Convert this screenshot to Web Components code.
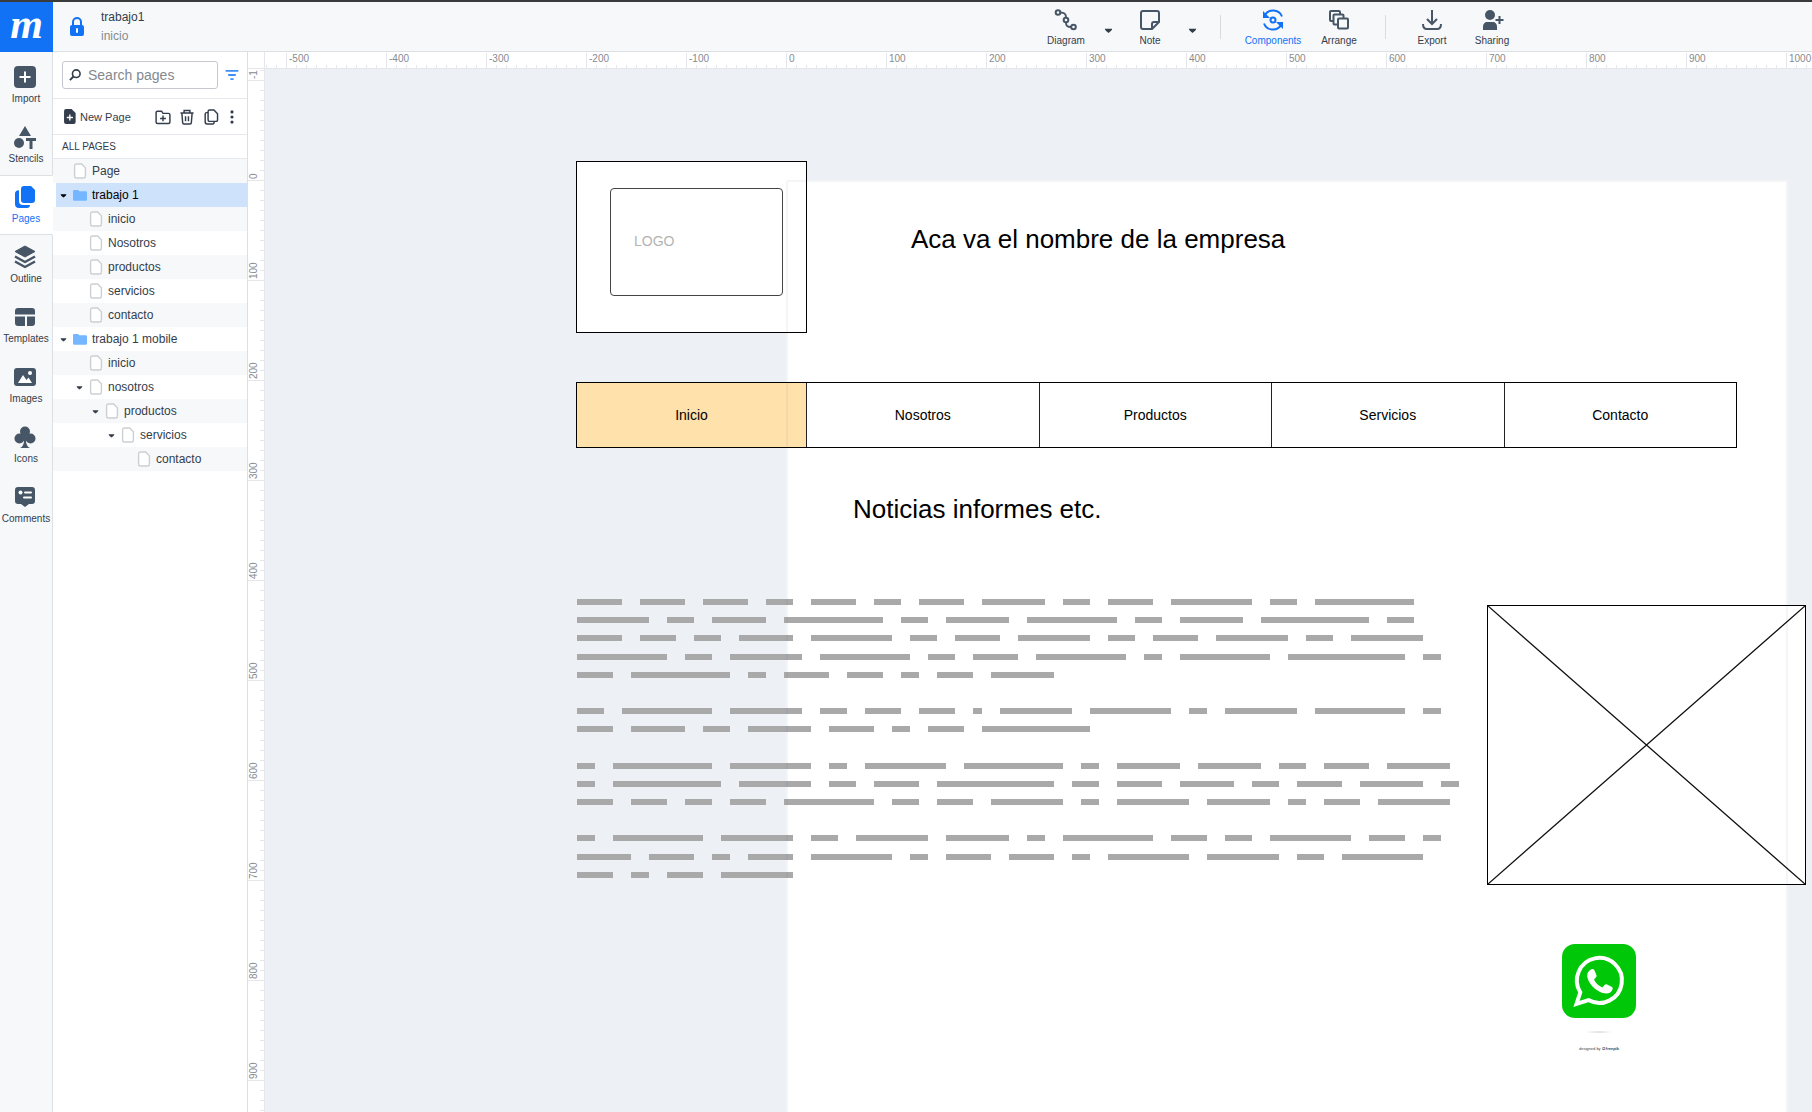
<!DOCTYPE html>
<html lang="es">
<head>
<meta charset="utf-8">
<title>trabajo1 - inicio</title>
<style>
  :root {
    --ink: #333d4b; --icon: #475666; --blue: #1272f5; --chrome: #f7f8fa;
    --line: #dcdfe4; --tick: #e4e6eb; --muted: #858b92; --canvas: #edf0f5;
  }
  html, body { height: 100%; margin: 0; }
  body { font: 12px/16px "Liberation Sans", Arial, sans-serif; color: var(--ink); overflow: hidden; }
</style>
</head>
<body>
<mock-app></mock-app>
<script>
const ICONS = {
  import: '<rect width="22" height="22" rx="4" fill="currentColor"/><path d="M11 5.500v11M5.500 11h11" stroke="#fff" stroke-width="2"/>',
  stencils: '<path d="M11 0l6 10H5zM12 12h10v3h-3.500v8h-3v-8H12z" fill="currentColor"/><circle cx="5" cy="17" r="5" fill="currentColor"/>',
  pages: '<path d="M10 0h7l4 4v10a3 3 0 0 1-3 3h-8a3 3 0 0 1-3-3V3a3 3 0 0 1 3-3z" fill="currentColor"/><path d="M5 4.500a3 3 0 0 0-4 3V18a4 4 0 0 0 4 4h8a3 3 0 0 0 3-3H9a4 4 0 0 1-4-4z" fill="currentColor"/>',
  outline: '<path d="M11 0l10 5.500L11 11 1 5.500z" fill="currentColor" stroke="currentColor" stroke-linejoin="round"/><path d="M1 10.500l10 5.500 10-5.500M1 15.500L11 21l10-5.500" fill="none" stroke="currentColor" stroke-width="2.500" stroke-linejoin="round"/>',
  templates: '<path d="M4 2h14a3 3 0 0 1 3 3v3.500H1V5a3 3 0 0 1 3-3zM1 10.500h10V20H4a3 3 0 0 1-3-3zM13 10.500h8V17a3 3 0 0 1-3 3h-5z" fill="currentColor"/>',
  images: '<rect y="2" width="22" height="18" rx="3" fill="currentColor"/><path d="M4 17l5-8 3.500 5 2-2.500L18 17z" fill="#fff"/><circle cx="16" cy="7" r="2" fill="#fff"/>',
  icons: '<g fill="currentColor"><circle cx="11" cy="5.500" r="5"/><circle cx="5.500" cy="12.500" r="5"/><circle cx="16.500" cy="12.500" r="5"/><path d="M10 8h2v8q1 5 4 6H6q3-1 4-6z"/></g>',
  comments: '<path d="M4 1h14a3 3 0 0 1 3 3v11a3 3 0 0 1-3 3h-3l-4 3-4-3H4a3 3 0 0 1-3-3V4a3 3 0 0 1 3-3z" fill="currentColor"/><path d="M11 6.500h6M10 11.500h7" stroke="#fff" stroke-width="2" stroke-linecap="round"/><circle cx="6.500" cy="6.500" r="2" fill="#fff"/>',
  diagram: '<g fill="none" stroke="currentColor" stroke-width="2"><circle cx="3" cy="3.500" r="2.300"/><circle cx="11" cy="11" r="2.300"/><circle cx="18.500" cy="18" r="2.300"/><path d="M5.500 3.500c4 0 5.500 1 5.500 5M11 13.500c0 3.500 1 4.500 5 4.500"/></g>',
  note: '<path d="M4 2h14a2 2 0 0 1 2 2v9l-7 7H4a2 2 0 0 1-2-2V4a2 2 0 0 1 2-2zM20 13h-5a2 2 0 0 0-2 2v5" fill="none" stroke="currentColor" stroke-width="2" stroke-linejoin="round"/>',
  components: '<g fill="none" stroke="currentColor" stroke-width="2"><circle cx="11" cy="11" r="2.500"/><path d="M2.500 7a9.500 9.500 0 0 1 17.500.500M2 14.500a9.500 9.500 0 0 0 17.500.500"/></g><path d="M1 2v7h7zM21 20v-7h-7z" fill="currentColor"/>',
  arrange: '<g fill="var(--chrome)" stroke="currentColor" stroke-width="2"><rect x="2" y="2" width="10" height="10" rx="1"/><rect x="5.500" y="5.500" width="10" height="10" rx="1"/><rect x="10" y="9.500" width="10" height="10" rx="1"/></g>',
  export: '<path d="M11 1v14M6 10l5 5 5-5M2 15q0 5 4 5h10q4 0 4-5" fill="none" stroke="currentColor" stroke-width="2"/>',
  sharing: '<g fill="currentColor"><circle cx="9" cy="6" r="5"/><path d="M2 21v-3c0-3.500 2-5 4-5h6c2 0 4 1.500 4 5v3z"/></g><path d="M18.500 7v8M14.500 11h8" stroke="currentColor" stroke-width="2"/>',
  lock: '<rect x="4" y="9" width="14" height="11" rx="2" fill="currentColor"/><path d="M7 10V6a4 4 0 0 1 8 0v4" fill="none" stroke="currentColor" stroke-width="2"/><path d="M11 13v3" stroke="#fff" stroke-width="2" stroke-linecap="round"/>',
  search: '<circle cx="13" cy="9" r="6" fill="none" stroke="currentColor" stroke-width="2.500"/><path d="M9 13l-6 6" stroke="currentColor" stroke-width="3"/>',
  filter: '<path d="M1 4.500h20M5 11h12M8.500 17.500h5" stroke="currentColor" stroke-width="3"/>',
  newpage: '<path d="M6 0h8l6 6v13a3 3 0 0 1-3 3H6a3 3 0 0 1-3-3V3a3 3 0 0 1 3-3z" fill="currentColor"/><path d="M11.500 8v9M7 12.500h9" stroke="#fff" stroke-width="2"/>',
  newfolder: '<path d="M1.500 5a2 2 0 0 1 2-2H9l2 3h7.500a2 2 0 0 1 2 2v10a2 2 0 0 1-2 2h-15a2 2 0 0 1-2-2z" fill="none" stroke="currentColor" stroke-width="2"/><path d="M11 9v8M7 13h8" stroke="currentColor" stroke-width="2"/>',
  trash: '<path d="M2 5.500h18M7 5V2h8v3M4 6l1 12.500a2 2 0 0 0 2 2h8a2 2 0 0 0 2-2L18 6M9 10v7M13 10v7" fill="none" stroke="currentColor" stroke-width="2"/>',
  copy: '<path d="M9 1.500h6l5 5V15a2 2 0 0 1-2 2H9a2 2 0 0 1-2-2V3.500a2 2 0 0 1 2-2zM7 5H5a2 2 0 0 0-2 2v11a2.500 2.500 0 0 0 2.500 2.500H13a2 2 0 0 0 2-3" fill="none" stroke="currentColor" stroke-width="2"/>',
  more: '<g fill="currentColor"><circle cx="11" cy="3" r="2.500"/><circle cx="11" cy="11" r="2.500"/><circle cx="11" cy="19" r="2.500"/></g>',
  caret: '<path d="M2 7h18q0 3-4 6l-5 4-5-4Q2 10 2 7z" fill="currentColor"/>',
  folder: '<path d="M0 5a2 2 0 0 1 2-2h6l2 2h10a2 2 0 0 1 2 2v11a2 2 0 0 1-2 2H2a2 2 0 0 1-2-2z" fill="#74b6ff"/>',
  doc: '<path d="M5.500 0h8l6 6v13a3 3 0 0 1-3 3h-11a3 3 0 0 1-3-3V3a3 3 0 0 1 3-3z" fill="#fff" stroke="#ccd0d4" stroke-width="2.200"/>'
};

function define(name, render) {
  customElements.define(name, class extends HTMLElement {
    connectedCallback() {
      if (this.shadowRoot) return;
      this.attachShadow({ mode: 'open' }).innerHTML = render(this);
    }
  });
}

define('app-icon', el => {
  const s = el.getAttribute('size') || 22;
  return `<style>:host{display:inline-flex;flex:none;width:${s}px;height:${s}px}svg{width:100%;height:100%;overflow:visible}</style>
  <svg viewBox="0 0 22 22" aria-hidden="true">${ICONS[el.getAttribute('name')]}</svg>`;
});

define('tool-button', el => `<style>
  :host{display:flex;width:var(--w,60px)}
  button{all:unset;flex:1;display:flex;flex-direction:column;align-items:center;gap:4px;font-size:10px;line-height:12px;color:var(--ink);cursor:pointer;white-space:nowrap}
  app-icon{color:var(--icon)}
  :host([active]) button,:host([active]) app-icon{color:var(--blue)}
</style><button type="button"><app-icon name="${el.getAttribute('icon')}"></app-icon><slot></slot></button>`);

define('caret-button', () => `<style>
  :host{display:flex;width:24px;align-self:center}
  button{all:unset;flex:1;display:flex;justify-content:center;color:var(--ink)}
</style><button type="button" aria-label="Más opciones"><app-icon name="caret" size="9"></app-icon></button>`);

define('top-bar', () => `<style>
  :host{display:flex;flex:none;height:49px;background:var(--chrome);border-top:2px solid #3a3b3d;border-bottom:1px solid var(--line)}
  .logo{flex:none;width:53px;height:50px;background:var(--blue);color:#fff;text-align:center;text-decoration:none;font:italic bold 42px/44px "Liberation Serif",serif}
  .lock{all:unset;color:var(--blue);display:flex;align-items:center;padding:0 13px}
  .doc{flex:1;display:flex;flex-direction:column;justify-content:center;gap:3px}
  .doc span{color:#858b92}
  nav{display:flex;padding:7px 290px 0 0}
  hr{width:1px;height:24px;margin:6px 16px 0;border:0;background:#d8dce1}
</style>
<a class="logo" href="#" aria-label="Inicio de la aplicación">m</a>
<button class="lock" type="button" aria-label="Bloqueado"><app-icon name="lock"></app-icon></button>
<div class="doc"><div>trabajo1</div><span>inicio</span></div>
<nav>
  <tool-button icon="diagram">Diagram</tool-button><caret-button></caret-button>
  <tool-button icon="note">Note</tool-button><caret-button></caret-button>
  <hr>
  <tool-button icon="components" active style="--w:72px">Components</tool-button>
  <tool-button icon="arrange">Arrange</tool-button>
  <hr>
  <tool-button icon="export">Export</tool-button>
  <tool-button icon="sharing">Sharing</tool-button>
</nav>`);

define('rail-item', el => `<style>
  :host{display:flex;height:60px;box-sizing:border-box;padding-top:11px;border-right:1px solid var(--line)}
  button{all:unset;flex:1;min-width:0;display:flex;flex-direction:column;align-items:center;gap:5px;font-size:10px;line-height:12px;white-space:nowrap}
  app-icon{color:var(--icon);margin-right:2px}
  :host([active]){background:#fff;padding-top:10px;border-top:1px solid var(--line);border-bottom:1px solid var(--line);border-right:1px solid #fff}
  :host([active]) button,:host([active]) app-icon{color:var(--blue)}
</style><button type="button"><app-icon name="${el.getAttribute('icon')}"></app-icon><slot></slot></button>`);

define('side-rail', () => `<style>
  :host{display:flex;flex-direction:column;flex:none;width:53px;background:var(--chrome)}
  i{height:3px;border-right:1px solid var(--line)} i:last-child{flex:1}
</style><i></i>
${['Import','Stencils','Pages','Outline','Templates','Images','Icons','Comments'].map(t =>
  `<rail-item icon="${t.toLowerCase()}" ${t === 'Pages' ? 'active' : ''}>${t}</rail-item>`).join('')}<i></i>`);

define('tree-row', el => {
  const level = +el.getAttribute('level') || 0;
  return `<style>
  :host{display:flex;height:24px}
  :host(:nth-child(odd)){background:var(--chrome)}
  :host([selected]){background:#cfe2fc;color:#000;margin-left:3px}
  a{flex:1;display:flex;align-items:center;padding-left:${5 + level * 16}px;color:inherit;text-decoration:none}
  :host([selected]) a{padding-left:2px}
  .c{width:11px;display:flex;justify-content:center;margin-right:4px}
  slot{display:block;margin-left:5px}
</style><a href="#"><span class="c">${el.hasAttribute('open') ? '<app-icon name="caret" size="7"></app-icon>' : ''}</span><app-icon name="${el.getAttribute('icon') || 'doc'}" size="14"></app-icon><slot></slot></a>`;
});

define('pages-panel', () => `<style>
  :host{display:flex;flex-direction:column;flex:none;width:194px;background:#fff;border-right:1px solid var(--line)}
  .search{display:flex;align-items:center;gap:7px;height:46px;padding:0 8px 0 9px;border-bottom:1px solid #e5e8ec}
  label{flex:1;min-width:0;height:26px;display:flex;align-items:center;gap:6px;padding-left:5px;border:1px solid #c5c9cf;border-radius:3px}
  input{all:unset;flex:1;min-width:0;font-size:14px;line-height:20px}
  input::placeholder{color:#83898f}
  button{all:unset;display:flex;align-items:center}
  .filter{color:#3d8ef7}
  .actions{display:flex;align-items:center;gap:8px;height:35px;padding:0 8px 0 9px;border-bottom:1px solid #e5e8ec}
  .new{flex:1;gap:3px;font-size:11px}
  .more{margin-left:-2px}
  h2{margin:0;font-size:10px;font-weight:400;line-height:23px;padding-left:9px;border-bottom:1px solid #e5e8ec}
</style>
<div class="search"><label><app-icon name="search" size="14"></app-icon><input type="search" placeholder="Search pages" aria-label="Search pages"></label>
<button class="filter" type="button" aria-label="Filtrar"><app-icon name="filter" size="14"></app-icon></button></div>
<div class="actions"><button class="new" type="button"><app-icon name="newpage" size="15"></app-icon>New Page</button>
<button type="button" aria-label="Nueva carpeta"><app-icon name="newfolder" size="16"></app-icon></button>
<button type="button" aria-label="Eliminar"><app-icon name="trash" size="16"></app-icon></button>
<button type="button" aria-label="Duplicar"><app-icon name="copy" size="16"></app-icon></button>
<button class="more" type="button" aria-label="Más"><app-icon name="more" size="14"></app-icon></button></div>
<h2>ALL PAGES</h2>
<div>
<tree-row>Page</tree-row><tree-row icon="folder" open selected>trabajo 1</tree-row>
<tree-row level="1">inicio</tree-row><tree-row level="1">Nosotros</tree-row><tree-row level="1">productos</tree-row><tree-row level="1">servicios</tree-row><tree-row level="1">contacto</tree-row>
<tree-row icon="folder" open>trabajo 1 mobile</tree-row><tree-row level="1">inicio</tree-row><tree-row level="1" open>nosotros</tree-row><tree-row level="2" open>productos</tree-row><tree-row level="3" open>servicios</tree-row><tree-row level="4">contacto</tree-row>
</div>`);

const segments = labels => labels.map(v => `<span>${v}</span>`).join('');
define('h-ruler', () => `<style>
  :host{display:flex;height:16px;overflow:hidden;background:#fff;border-bottom:1px solid var(--tick);font-size:10px;line-height:12px;color:var(--muted)}
  div{display:flex;margin-left:-79px}
  span{flex:none;box-sizing:border-box;width:100px;height:15px;margin-top:1px;border-left:1px solid var(--tick);padding-left:2px;
    background:repeating-linear-gradient(to right,transparent 0 9px,var(--tick) 9px 10px) 0 100%/100% 3px no-repeat}
</style><div>${segments(['', -500, -400, -300, -200, -100, 0, 100, 200, 300, 400, 500, 600, 700, 800, 900, 1000])}</div>`);

define('v-ruler', () => `<style>
  :host{display:flex;flex-direction:column;overflow:hidden;background:#fff;border-right:1px solid var(--tick);font-size:10px;line-height:12px;color:var(--muted)}
  div{display:flex;flex-direction:column;margin-top:-88px}
  span{flex:none;box-sizing:border-box;height:100px;writing-mode:vertical-rl;display:flex;
    transform:rotate(180deg);border-top:1px solid var(--tick);padding:1px 0 0 4px;
    background:repeating-linear-gradient(to bottom,transparent 0 9px,var(--tick) 9px 10px) 0 0/4px 100% no-repeat}
</style><div>${segments(['-1', 0, 100, 200, 300, 400, 500, 600, 700, 800, 900, ''])}</div>`);

const TEXT_ROWS = ['5 5 5 3 5 3 5 7 3 5 9 3 11','8 3 6 11 3 7 10 3 7 12 3','5 4 3 6 9 3 5 8 3 5 8 3 8','10 3 8 10 3 5 10 2 10 13 2','4 11 2 5 4 2 4 7','',
  '3 10 8 3 4 4 1 8 9 2 8 10 2','4 6 3 7 5 2 4 12','','2 11 9 2 9 11 2 7 7 3 5 7','2 12 8 3 5 13 3 5 6 3 5 7 2','4 4 3 4 10 3 4 8 2 8 7 2 4 8','',
  '2 10 8 3 8 7 2 10 4 3 9 4 2','6 5 2 5 9 2 5 5 2 9 8 3 9','4 2 4 8'];
define('block-text', () => `<style>
  :host{display:flex;flex-direction:column;justify-content:space-between;height:279px}
  div{display:flex;gap:18px;height:6px} i{width:calc(var(--n)*9px);background:#a9a9a9}
</style>${TEXT_ROWS.map(r => `<div>${r ? r.split(' ').map(n => `<i style="--n:${n}"></i>`).join('') : ''}</div>`).join('')}`);

define('menu-mock', () => `<style>
  :host{display:flex;box-sizing:border-box;height:66px;border:1px solid #000;background:#fff;font-size:14px}
  a{flex:1;display:flex;align-items:center;justify-content:center;color:#000;text-decoration:none;border-left:1px solid #222}
  a:first-of-type{flex:0 0 229px;background:#ffe1ab;border:0}
</style>${['Inicio','Nosotros','Productos','Servicios','Contacto'].map(t => `<a href="#">${t}</a>`).join('')}`);

define('logo-mock', () => `<style>
  :host{display:flex;box-sizing:border-box;width:231px;height:172px;border:1px solid #000;background:#fff;padding:26px 23px 36px 33px}
  div{flex:1;display:flex;align-items:center;border:1px solid #444;border-radius:4px;padding:0 0 2px 23px;font-size:14px;color:#b4b4b4}
</style><div>LOGO</div>`);

define('image-mock', () => `<style>
  :host{display:block;box-sizing:border-box;width:319px;height:280px;border:1px solid #000;background:#fff}
  svg{display:block;width:100%;height:100%}
</style><svg viewBox="0 0 317 278" preserveAspectRatio="none" aria-hidden="true"><path d="M0 0L317 278M317 0L0 278" stroke="#111" stroke-width="1.300"/></svg>`);

define('whatsapp-mock', () => `<style>
  :host{display:flex;flex-direction:column;align-items:center;width:74px}
  .badge{width:74px;height:74px}
  .shade{width:30px;height:2px;margin:13px 0;border-radius:50%;background:radial-gradient(closest-side,#ccc,#fff)}
  small{font-size:4px;line-height:6px;color:#444;white-space:nowrap}
</style><svg class="badge" viewBox="0 0 74 74" aria-hidden="true"><rect width="74" height="74" rx="13" fill="#00c707"/>
<path d="M26.500 56.100A22.500 22.500 0 1 0 18.300 48.300L14.500 60Z" fill="none" stroke="#fff" stroke-width="4"/>
<path d="M29 25.500c1.500-.8 2.700-.6 3.400.8l2 4.600c.4 1 .1 1.800-.6 2.600l-1.800 2c1.600 3.600 4.600 6.400 8.400 8l2.200-2.400c.7-.8 1.500-1 2.400-.6l4.600 2.200c1 .5 1.300 1.200 1 2.200-.8 3-3.400 4.600-6.400 4.600-8.600-.4-18.600-9.600-19-18 0-2.600 1.600-5 3.800-6z" fill="#fff"/></svg>
<div class="shade"></div><small>designed by ✪ <b>freepik</b></small>`);

define('design-canvas', () => `<style>
  :host{display:block;position:relative;overflow:hidden;background:var(--canvas);color:#000}
  .origin{position:absolute;left:521px;top:111px}
  .origin>*{position:absolute;left:var(--x);top:var(--y)}
  .sheet,.edge{box-sizing:border-box;width:1002px;height:1200px;border-radius:2px}
  .sheet{background:#fff}
  .edge{border:2px solid rgba(40,60,90,.05);pointer-events:none}
  h1{margin:0;font-size:26px;font-weight:400;line-height:30px;white-space:nowrap}
  menu-mock{width:1161px}
</style>
<div class="origin">
  <div class="sheet" style="--x:0px;--y:0px"></div>
  <logo-mock style="--x:-210px;--y:-19px"></logo-mock>
  <h1 style="--x:125px;--y:44px">Aca va el nombre de la empresa</h1>
  <menu-mock style="--x:-210px;--y:202px"></menu-mock>
  <h1 style="--x:67px;--y:314px">Noticias informes etc.</h1>
  <block-text style="--x:-209px;--y:419px"></block-text>
  <image-mock style="--x:701px;--y:425px"></image-mock>
  <whatsapp-mock style="--x:776px;--y:764px"></whatsapp-mock>
  <div class="edge" style="--x:0px;--y:0px"></div>
</div>`);

define('work-area', () => `<style>
  :host{flex:1;min-width:0;display:grid;grid-template:17px minmax(0,1fr)/17px minmax(0,1fr)}
  .corner{background:#fff;border-right:1px solid var(--tick);border-bottom:1px solid var(--tick)}
</style><div class="corner"></div><h-ruler></h-ruler><v-ruler></v-ruler><design-canvas></design-canvas>`);

define('mock-app', () => `<style>
  :host{display:flex;flex-direction:column;height:100vh}
  main{flex:1;min-height:0;display:flex}
</style><top-bar></top-bar><main><side-rail></side-rail><pages-panel></pages-panel><work-area></work-area></main>`);
</script>
</body>
</html>
